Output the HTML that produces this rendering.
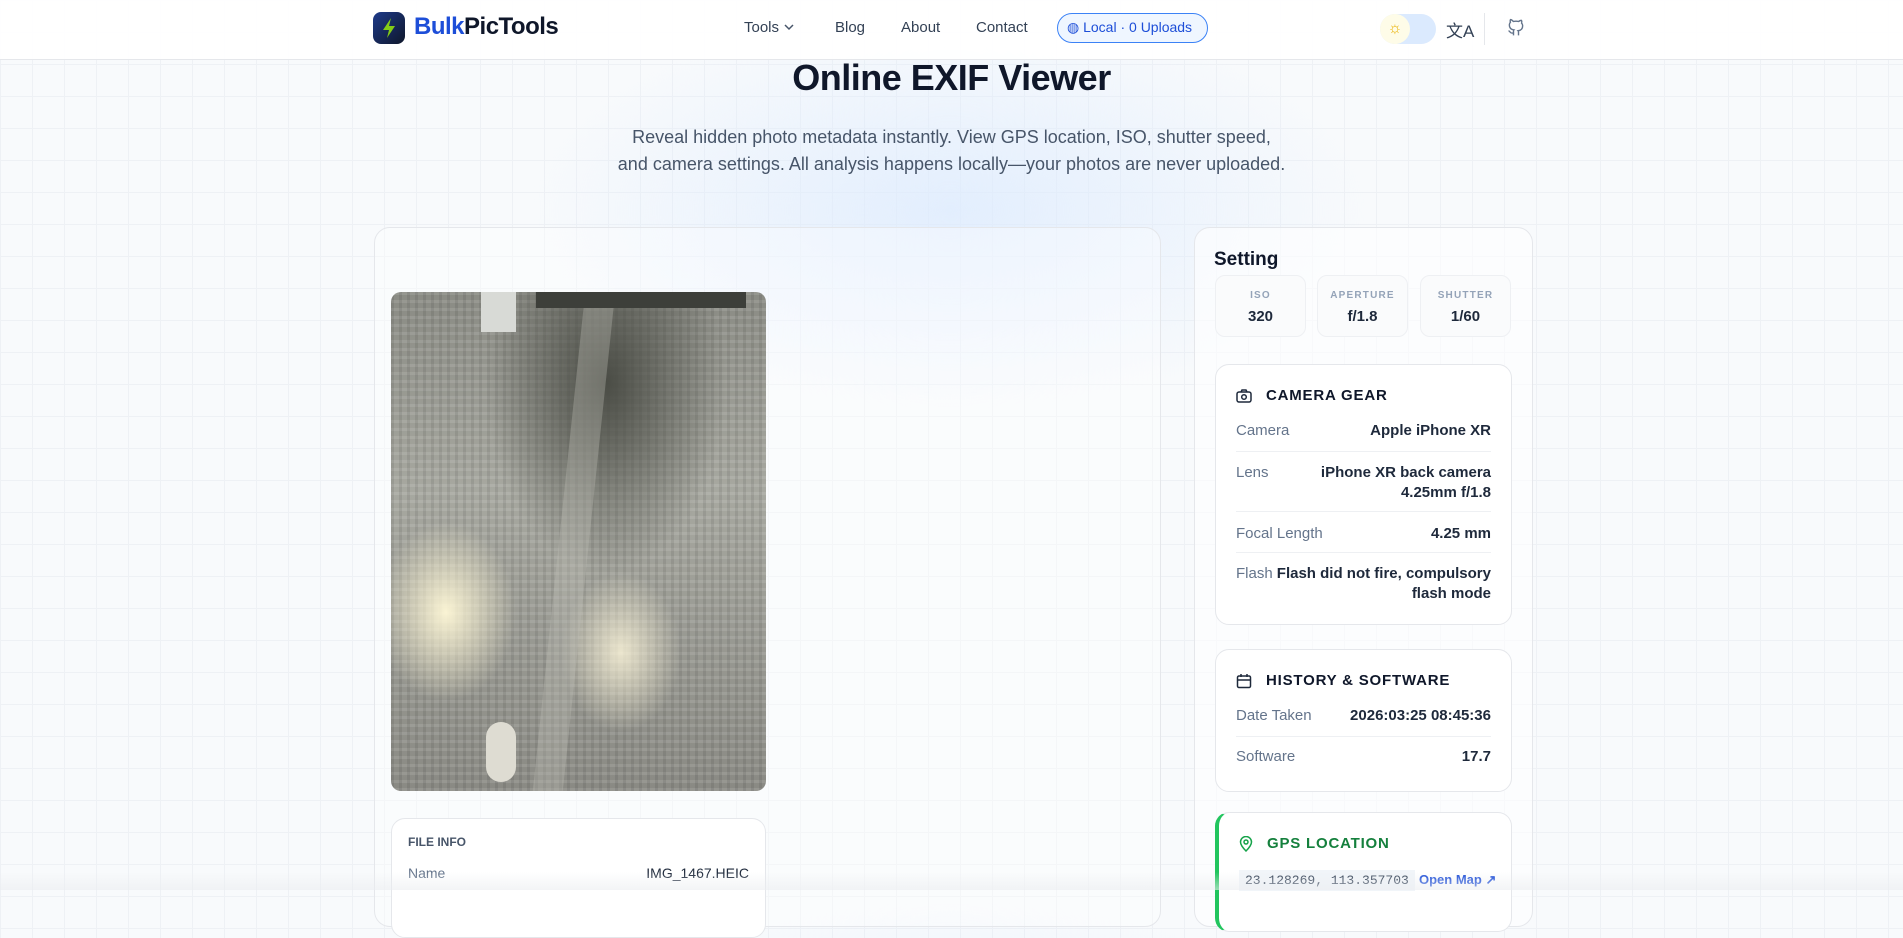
<!DOCTYPE html>
<html><head><meta charset="utf-8"><style>
*{box-sizing:border-box;margin:0;padding:0}
body{width:1903px;height:890px;overflow:hidden;font-family:"Liberation Sans",sans-serif;color:#0f172a;
background-color:#f8fafc;
background-image:radial-gradient(ellipse 420px 200px at 950px 210px,rgba(219,234,254,.75),rgba(219,234,254,0)),linear-gradient(#eef1f5 1px,transparent 1px),linear-gradient(90deg,#eef1f5 1px,transparent 1px);
background-size:100% 100%,32px 32px,32px 32px;position:relative}
.hdr{position:absolute;left:0;top:0;width:1903px;height:60px;background:rgba(255,255,255,.92);border-bottom:1px solid #e5e7eb}
.abs{position:absolute}
.nav{top:19px;font-size:15px;color:#334155}
.card{position:absolute;background:#fff;border:1px solid #e5e7eb;border-radius:14px}
.row{position:absolute;left:20px;right:20px;font-size:15px;display:flex;justify-content:space-between;border-bottom:1px solid #eef0f3}
.row .k{color:#64748b}.row .v{font-weight:bold;color:#1e293b;text-align:right}
.h{position:absolute;left:20px;font-weight:bold;font-size:15px;letter-spacing:.8px;display:flex;align-items:center;gap:14px}
.stat{position:absolute;top:275px;width:91px;height:62px;border:1px solid #eef0f3;border-radius:10px;background:#fafbfc;text-align:center}
.stat .l{font-size:10px;letter-spacing:1.2px;color:#94a3b8;margin-top:14px;font-weight:bold}
.stat .n{font-size:15px;font-weight:bold;margin-top:7px;color:#1e293b}
</style></head><body>
<div class="hdr">
 <div class="abs" style="left:373px;top:12px;width:32px;height:32px;border-radius:8px;background:linear-gradient(135deg,#1e3a8a,#0f172a)"><svg width="32" height="32" viewBox="0 0 32 32"><path d="M18 6 L10 18 H16 L14 26 L22 14 H16 Z" fill="#84cc16"/></svg></div>
 <div class="abs" style="left:414px;top:13px;font-size:24px;font-weight:bold;letter-spacing:-.5px"><span style="color:#1d4ed8">Bulk</span><span style="color:#0f172a">PicTools</span></div>
 <div class="abs nav" style="left:744px">Tools <svg width="12" height="10" viewBox="0 0 12 10"><path d="M2 3 L6 7 L10 3" stroke="#475569" stroke-width="1.5" fill="none"/></svg></div>
 <div class="abs nav" style="left:835px">Blog</div>
 <div class="abs nav" style="left:901px">About</div>
 <div class="abs nav" style="left:976px">Contact</div>
 <div class="abs" style="left:1057px;top:13px;width:151px;height:30px;border:1.5px solid #3b82f6;border-radius:15px;background:#eff6ff;color:#1d4ed8;font-size:14px;line-height:27px;padding-left:9px">◍ Local · 0 Uploads</div>
 <div class="abs" style="left:1380px;top:14px;width:56px;height:30px;border-radius:15px;background:#dbeafe"><div style="width:30px;height:30px;border-radius:15px;background:#fefce8;color:#eab308;text-align:center;line-height:30px;font-size:16px">☼</div></div>
 <div class="abs" style="left:1446px;top:17px;font-size:17px;color:#334155">文A</div>
 <div class="abs" style="left:1484px;top:13px;width:1px;height:32px;background:#e5e7eb"></div>
 <div class="abs" style="left:1506px;top:16px"><svg width="20" height="22" viewBox="0 0 24 24" fill="none" stroke="#64748b" stroke-width="1.7"><path d="M9 19c-4 1.5-4-2-6-2.5M15 22v-3.5c0-1 .1-1.4-.5-2 2.8-.3 5.5-1.4 5.5-6a4.6 4.6 0 0 0-1.3-3.2 4.2 4.2 0 0 0-.1-3.2s-1.1-.3-3.5 1.3a12 12 0 0 0-6.2 0C6.5 2.8 5.4 3.1 5.4 3.1a4.2 4.2 0 0 0-.1 3.2A4.6 4.6 0 0 0 4 9.5c0 4.6 2.7 5.7 5.5 6-.6.6-.6 1.2-.5 2V22"/></svg></div>
</div>
<div class="abs" style="left:0;width:1903px;top:57px;text-align:center;font-size:36px;font-weight:bold;letter-spacing:-.5px;color:#0f172a">Online EXIF Viewer</div>
<div class="abs" style="left:0;width:1903px;top:124px;text-align:center;font-size:18px;line-height:27px;color:#475569">Reveal hidden photo metadata instantly. View GPS location, ISO, shutter speed,<br>and camera settings. All analysis happens locally—your photos are never uploaded.</div>

<div class="abs" style="left:374px;top:227px;width:787px;height:700px;border:1px solid #e5e7eb;border-radius:16px;background:rgba(255,255,255,.35)"></div>
<div class="abs" style="left:391px;top:292px;width:375px;height:499px;border-radius:10px;overflow:hidden;background:
radial-gradient(ellipse 70px 90px at 55px 320px,rgba(255,248,215,.95),transparent),
radial-gradient(ellipse 60px 80px at 230px 360px,rgba(255,248,220,.8),transparent),
radial-gradient(ellipse 120px 190px at 215px 90px,#4a4c45,transparent),
repeating-linear-gradient(90deg,rgba(0,0,0,.08) 0 3px,transparent 3px 8px),
repeating-linear-gradient(0deg,rgba(255,255,255,.1) 0 3px,transparent 3px 8px),
linear-gradient(180deg,#8a8b84,#a7a8a0 40%,#8a8a84)">
 <div style="position:absolute;left:168px;top:0;width:30px;height:499px;background:rgba(190,190,180,.35);transform:skewX(-6deg)"></div>
 <div style="position:absolute;left:90px;top:0;width:35px;height:40px;background:#d8dad6"></div>
 <div style="position:absolute;left:145px;top:0;width:210px;height:16px;background:#3d3f3a"></div>
 <div style="position:absolute;left:95px;top:430px;width:30px;height:60px;border-radius:15px;background:#dedcd2"></div>
</div>
<div class="card" style="left:391px;top:818px;width:375px;height:120px">
 <div style="position:absolute;left:16px;top:16px;font-size:12px;font-weight:bold;color:#475569">FILE INFO</div>
 <div style="position:absolute;left:16px;right:16px;top:46px;font-size:14px;display:flex;justify-content:space-between"><span style="color:#64748b">Name</span><span style="color:#1e293b">IMG_1467.HEIC</span></div>
</div>

<div class="abs" style="left:1194px;top:227px;width:339px;height:700px;border:1px solid #e5e7eb;border-radius:16px;background:rgba(255,255,255,.6)"></div>
<div class="abs" style="left:1214px;top:249px;font-size:19px;font-weight:bold">Setting</div>
<div class="stat" style="left:1215px"><div class="l">ISO</div><div class="n">320</div></div>
<div class="stat" style="left:1317px"><div class="l">APERTURE</div><div class="n">f/1.8</div></div>
<div class="stat" style="left:1420px"><div class="l">SHUTTER</div><div class="n">1/60</div></div>

<div class="card" style="left:1215px;top:364px;width:297px;height:261px">
 <div class="h" style="top:22px"><svg width="16" height="14" viewBox="0 0 16 14" fill="none" stroke="#1e293b" stroke-width="1.5"><rect x="1" y="3" width="14" height="10" rx="2"/><path d="M5 3 L6 1 H10 L11 3"/><circle cx="8" cy="8" r="2.3"/></svg>CAMERA GEAR</div>
 <div class="row" style="top:57px;height:30px"><span class="k">Camera</span><span class="v">Apple iPhone XR</span></div>
 <div class="row" style="top:98px;height:49px;line-height:20px"><span class="k">Lens</span><span class="v">iPhone XR back camera<br>4.25mm f/1.8</span></div>
 <div class="row" style="top:160px;height:28px"><span class="k">Focal Length</span><span class="v">4.25 mm</span></div>
 <div class="row" style="top:199px;height:50px;line-height:20px;border:0"><span class="k">Flash</span><span class="v">Flash did not fire, compulsory<br>flash mode</span></div>
</div>

<div class="card" style="left:1215px;top:649px;width:297px;height:143px">
 <div class="h" style="top:22px"><svg width="16" height="16" viewBox="0 0 16 16" fill="none" stroke="#1e293b" stroke-width="1.5"><rect x="1.5" y="3" width="13" height="11.5" rx="1.5"/><path d="M1.5 7 H14.5 M5 1 V4 M11 1 V4"/></svg>HISTORY &amp; SOFTWARE</div>
 <div class="row" style="top:57px;height:30px"><span class="k">Date Taken</span><span class="v">2026:03:25 08:45:36</span></div>
 <div class="row" style="top:98px;height:35px;border:0"><span class="k">Software</span><span class="v">17.7</span></div>
</div>

<div class="card" style="left:1215px;top:812px;width:297px;height:120px;border-left:4px solid #22c55e">
 <div class="h" style="top:22px;color:#15803d;left:20px"><svg width="14" height="16" viewBox="0 0 14 16" fill="none" stroke="#16a34a" stroke-width="1.5"><path d="M7 15 C3 11 1.5 8.5 1.5 6 a5.5 5.5 0 0 1 11 0 C12.5 8.5 11 11 7 15Z"/><circle cx="7" cy="6" r="2"/></svg>GPS LOCATION</div>
 <div style="position:absolute;left:20px;top:57px;background:#f1f5f9;font-family:'Liberation Mono',monospace;font-size:13px;padding:3px 6px;color:#334155">23.128269, 113.357703</div>
 <div style="position:absolute;left:200px;top:59px;font-size:13px;font-weight:bold;color:#1d4ed8;white-space:nowrap">Open Map ↗</div>
</div>
<div class="abs" style="left:0;top:872px;width:1903px;height:18px;background:linear-gradient(rgba(255,255,255,0),rgba(235,237,240,.6))"></div>
</body></html>
